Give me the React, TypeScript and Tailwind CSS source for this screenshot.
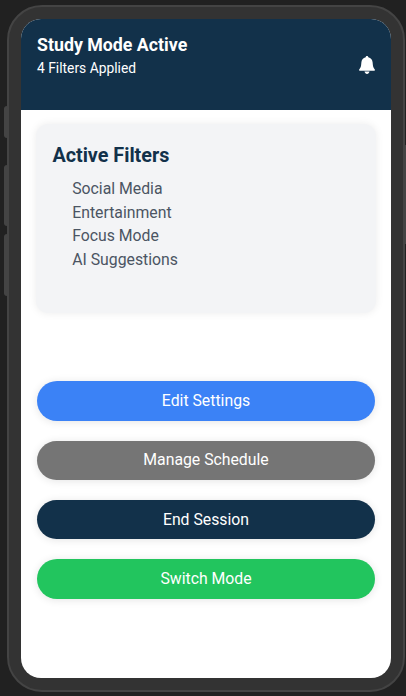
import React from "react";

const filters = ["Social Media", "Entertainment", "Focus Mode", "AI Suggestions"];

const actions = [
  { label: "Edit Settings", color: "bg-[#3b82f6]" },
  { label: "Manage Schedule", color: "bg-[#757575]" },
  { label: "End Session", color: "bg-[#12314a]" },
  { label: "Switch Mode", color: "bg-[#22c55e]" },
];

function BellIcon() {
  return (
    <svg className="mr-[0.5px] h-[18px] w-4" viewBox="0 0 16 18" fill="white" aria-hidden="true">
      <path d="M8 0C7.3 0 6.8.5 6.7 1.2C4.2 1.7 2.6 3.6 2.4 6.2L2.1 9.2C1.9 11 1.2 12.2.3 13.3C0 13.8 0 14.8.6 14.8H15.4C16 14.8 16 13.8 15.7 13.3C14.8 12.2 14.1 11 13.9 9.2L13.6 6.2C13.4 3.6 11.8 1.7 9.3 1.2C9.2.5 8.7 0 8 0Z" />
      <path d="M5.5 15.6h5c-.3 1.4-1.3 2.4-2.5 2.4s-2.2-1-2.5-2.4Z" />
    </svg>
  );
}

export default function App() {
  return (
    <div className="relative h-[696px] w-[406px] overflow-hidden bg-[#212121] pt-[5.4px] pl-[7px] font-['Roboto',sans-serif]">
      <span className="absolute top-[106px] left-1 h-8 w-[3px] rounded-l-sm bg-[#444]" />
      <span className="absolute top-[165px] left-1 h-[61px] w-[3px] rounded-l-sm bg-[#444]" />
      <span className="absolute top-[234px] left-1 h-[62px] w-[3px] rounded-l-sm bg-[#444]" />
      <span className="absolute top-[145px] left-[405px] h-[99px] w-[3px] rounded-r-sm bg-[#444]" />
      <div className="relative h-[686.2px] w-[398px] rounded-[35px] border-2 border-[#444] bg-[#333] p-3">
        <div className="flex h-[658.2px] flex-col overflow-hidden rounded-[20px] bg-white">
          <header className="flex h-[90.7px] shrink-0 items-center justify-between bg-[#12314a] px-4 text-white">
            <div className="h-[62px]">
              <h1 className="text-[17.78px] leading-[22px] font-bold">Study Mode Active</h1>
              <p className="mt-[2px] text-[13.83px] leading-5">4 Filters Applied</p>
            </div>
            <BellIcon />
          </header>
          <main className="px-[15.4px] pt-[14px]">
            <section className="h-[189px] rounded-xl bg-[#f3f4f6] px-4 pt-[18px] shadow-[0_0_8px_rgba(0,0,0,0.08)]">
              <h2 className="text-[19.76px] leading-7 font-bold text-[#12314a]">Active Filters</h2>
              <ul className="mt-[7px] pl-[19.8px] text-[15.81px] leading-[23.7px] text-[#4b5563]">
                {filters.map((filter) => (
                  <li key={filter}>{filter}</li>
                ))}
              </ul>
            </section>
            <div className="mx-[0.4px] mt-[68.2px] flex flex-col gap-[19.8px]">
              {actions.map(({ label, color }) => (
                <button key={label} className={`h-[39.5px] rounded-full text-[15.81px] text-white shadow-[0_1px_8px_rgba(0,0,0,0.11)] ${color}`}>
                  {label}
                </button>
              ))}
            </div>
          </main>
        </div>
      </div>
    </div>
  );
}
